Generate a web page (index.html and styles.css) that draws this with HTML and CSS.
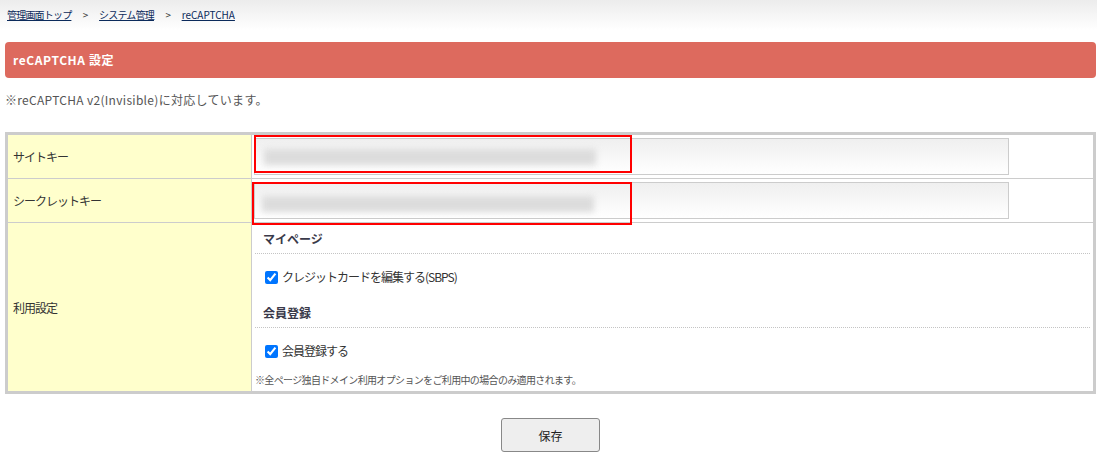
FILE: index.html
```html
<!DOCTYPE html>
<html lang="ja">
<head>
    <meta charset="UTF-8">
    <title>reCAPTCHA 設定</title>
    <link rel="stylesheet" href="styles.css">
</head>
<body>
    <div class="breadcrumb">
        <a href="#">管理画面トップ</a>
        <span class="sep">&gt;</span>
        <a href="#">システム管理</a>
        <span class="sep">&gt;</span>
        <a href="#" class="latin">reCAPTCHA</a>
    </div>
    <div class="page">
        <h1 class="page-title">reCAPTCHA 設定</h1>
        <p class="lead">※reCAPTCHA v2(Invisible)に対応しています。</p>
        <table class="form-table">
            <tr>
                <th>サイトキー</th>
                <td class="field">
                    <input type="text" class="text-input">
                    <div class="mark mark-1"><span class="masked"></span></div>
                </td>
            </tr>
            <tr>
                <th>シークレットキー</th>
                <td class="field">
                    <input type="text" class="text-input">
                    <div class="mark mark-2"><span class="masked"></span></div>
                </td>
            </tr>
            <tr>
                <th>利用設定</th>
                <td class="options">
                    <div class="group-title first">マイページ</div>
                    <label class="check-row"><input type="checkbox" checked>クレジットカードを編集する(SBPS)</label>
                    <div class="group-title">会員登録</div>
                    <label class="check-row last"><input type="checkbox" checked>会員登録する</label>
                    <div class="small-note">※全ページ独自ドメイン利用オプションをご利用中の場合のみ適用されます。</div>
                </td>
            </tr>
        </table>
        <div class="actions">
            <button type="button" class="save-btn">保存</button>
        </div>
    </div>
</body>
</html>
```

FILE: styles.css
```css
body {
    margin: 0;
    background: #fff;
    color: #333;
    font-family: "Noto Sans CJK JP", "Liberation Sans", sans-serif;
    font-size: 12px;
}
.breadcrumb {
    height: 30px;
    padding: 0 7px;
    line-height: 29px;
    font-size: 10px;
    letter-spacing: -0.8px;
    background: linear-gradient(#ececec, #fff);
}
.breadcrumb a {
    color: #0b2a5b;
    text-decoration: underline;
}
.breadcrumb a.latin {
    letter-spacing: 0;
}
.breadcrumb .sep {
    color: #333;
    margin: 0 10px 0 10px;
}
.page {
    padding: 0 1px 0 5px;
}
.page-title {
    margin: 12px 0 0;
    height: 36px;
    line-height: 36px;
    padding-left: 8px;
    background: #dd6a5e;
    color: #fff;
    font-size: 12px;
    font-weight: bold;
    letter-spacing: 0.6px;
    border-radius: 4px;
}
.lead {
    margin: 13px 0 0;
    line-height: 18px;
    color: #555;
    letter-spacing: 0.3px;
}
.form-table {
    width: 100%;
    margin-top: 23px;
    border-collapse: collapse;
    border: 3px solid #ccc;
}
.form-table th,
.form-table td {
    border: 1px solid #ccc;
    font-weight: normal;
    text-align: left;
}
.form-table th {
    width: 233px;
    padding: 0 5px;
    background: #ffffcc;
    vertical-align: middle;
    letter-spacing: -1px;
}
.field {
    position: relative;
    height: 36px;
    padding: 3px 2px 3px 2px;
}
.text-input {
    display: block;
    box-sizing: border-box;
    width: 755px;
    height: 37px;
    margin: 0;
    border: 1px solid #ccc;
    background: linear-gradient(#efefef, #fff);
}
.mark {
    position: absolute;
    box-sizing: border-box;
    border: 2px solid #ff0000;
}
.mark-1 {
    left: 2px;
    top: 0;
    width: 378px;
    height: 38px;
}
.mark-2 {
    left: 0;
    top: 3px;
    width: 380px;
    height: 43px;
}
.masked {
    position: absolute;
    left: 8px;
    top: 12px;
    width: 332px;
    height: 16px;
    background: #dcdcdc;
    filter: blur(3px);
}
.options {
    padding: 0 3px;
}
.group-title {
    padding: 5px 8px 7px;
    line-height: 15px;
    font-weight: bold;
    color: #3a3a4a;
    border-bottom: 1px dotted #c4c4c4;
}
.group-title.first {
    padding-top: 8px;
}
.check-row {
    display: flex;
    align-items: center;
    padding: 15px 10px;
    line-height: 16px;
    letter-spacing: -1px;
}
.check-row.last {
    padding-bottom: 14px;
}
.check-row input {
    width: 13px;
    height: 13px;
    margin: 0 4px 0 0;
}
.small-note {
    padding-bottom: 4px;
    font-size: 10px;
    line-height: 14px;
    color: #555;
    letter-spacing: -0.65px;
}
.actions {
    margin-top: 24px;
    text-align: center;
}
.save-btn {
    width: 99px;
    height: 34px;
    background: #eee;
    border: 1px solid #888;
    border-radius: 3px;
    font-family: inherit;
    font-size: 12px;
    color: #222;
}
```
